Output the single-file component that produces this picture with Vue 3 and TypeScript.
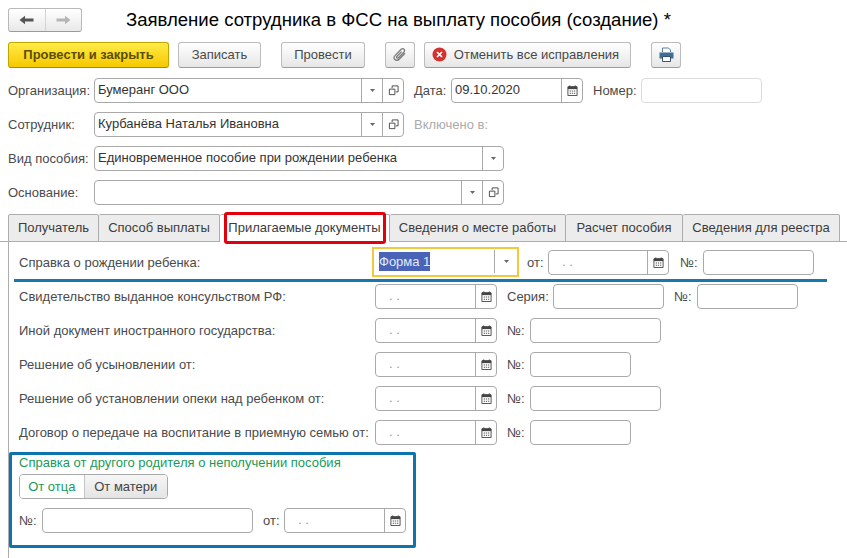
<script setup lang="ts">
interface Part { label: string; labelWidth: number; inputWidth: number }
interface DocRow { label: string; parts: Part[] }

const tabs: { name: string; width: number; active?: boolean }[] = [
  { name: 'Получатель', width: 91 },
  { name: 'Способ выплаты', width: 121 },
  { name: 'Прилагаемые документы', width: 170, active: true },
  { name: 'Сведения о месте работы', width: 176 },
  { name: 'Расчет пособия', width: 117 },
  { name: 'Сведения для реестра', width: 157 },
]

const no = (w: number): Part => ({ label: '№:', labelWidth: 23, inputWidth: w })

const docRows: DocRow[] = [
  { label: 'Свидетельство выданное консульством РФ:', parts: [{ label: 'Серия:', labelWidth: 46, inputWidth: 111 }, no(101)] },
  { label: 'Иной документ иностранного государства:', parts: [no(131)] },
  { label: 'Решение об усыновлении от:', parts: [no(101)] },
  { label: 'Решение об установлении опеки над ребенком от:', parts: [no(131)] },
  { label: 'Договор о передаче на воспитание в приемную семью от:', parts: [no(101)] },
]
</script>

<template>
  <div class="page">
    <svg class="defs" width="0" height="0" aria-hidden="true">
      <symbol id="i-cal" viewBox="0 0 12 12">
        <path d="M1 2h10v9.5H1z" fill="#fff" stroke="#444" stroke-width="1" />
        <path d="M1 1.5h10v3H1z" fill="#444" />
        <path d="M3 0.5v2M9 0.5v2" stroke="#444" stroke-width="1.2" />
        <path d="M3 6h1.4v1.2H3zM5.3 6h1.4v1.2H5.3zM7.6 6H9v1.2H7.6zM3 8.4h1.4v1.2H3zM5.3 8.4h1.4v1.2H5.3zM7.6 8.4H9v1.2H7.6z" fill="#555" />
      </symbol>
      <symbol id="i-open" viewBox="0 0 12 12">
        <path d="M4.5 3.5V1h6.5v6.5H8.5" fill="none" stroke="#444" stroke-width="1" />
        <path d="M1.5 4.5h6v6h-6z" fill="none" stroke="#444" stroke-width="1" />
      </symbol>
      <symbol id="i-down" viewBox="0 0 7 4">
        <path d="M0 0h7L3.5 4z" fill="#666" />
      </symbol>
    </svg>

    <section class="head">
      <div class="title-row">
        <div class="nav">
          <button class="nav-btn">
            <svg width="15" height="10" viewBox="0 0 15 10"><path d="M0.5 5L6 0.8V3.6H14.5V6.4H6V9.2z" fill="#555" /></svg>
          </button>
          <button class="nav-btn">
            <svg width="15" height="10" viewBox="0 0 15 10"><path d="M14.5 5L9 0.8V3.6H0.5V6.4H9V9.2z" fill="#b5b5b5" /></svg>
          </button>
        </div>
        <h1 class="title">Заявление сотрудника в ФСС на выплату пособия (создание) *</h1>
      </div>

      <div class="toolbar">
        <button class="btn primary">Провести и закрыть</button>
        <button class="btn b-save">Записать</button>
        <button class="btn b-post">Провести</button>
        <button class="btn b-clip" aria-label="Файлы">
          <svg width="16" height="16" viewBox="0 0 16 16">
            <path d="M13 6.2L7.2 12.2C5.9 13.5 4 13.6 2.9 12.5C1.8 11.4 2 9.6 3.2 8.4L9 2.5C9.9 1.6 11.2 1.5 12 2.3C12.8 3.1 12.7 4.3 11.8 5.2L6.4 10.7C5.9 11.2 5.2 11.3 4.8 10.9C4.4 10.5 4.5 9.8 5 9.3L9.6 4.6" fill="none" stroke="#7b7b7b" stroke-width="1.3" />
          </svg>
        </button>
        <button class="btn b-undo">
          <svg width="15" height="15" viewBox="0 0 15 15">
            <circle cx="7.5" cy="7.5" r="7" fill="#d4322e" />
            <path d="M5 5l5 5M10 5l-5 5" stroke="#fff" stroke-width="1.7" />
          </svg>
          Отменить все исправления
        </button>
        <button class="btn b-print" aria-label="Печать">
          <svg width="15" height="15" viewBox="0 0 15 15">
            <path d="M3.5 5V1h6l2 2v2" fill="#fff" stroke="#5d7f9c" />
            <path d="M0.5 5.5h14v6h-14z" fill="#3f6f96" />
            <path d="M3.5 9.5h8v5h-8z" fill="#fff" stroke="#35536e" />
          </svg>
        </button>
      </div>

      <div class="row">
        <label class="lab w-main">Организация:</label>
        <div class="field w-310">
          <span class="val">Бумеранг ООО</span>
          <span class="cell"><svg class="tri"><use href="#i-down" /></svg></span>
          <span class="cell"><svg class="ico"><use href="#i-open" /></svg></span>
        </div>
        <label class="lab w-date">Дата:</label>
        <div class="field w-132">
          <span class="val">09.10.2020</span>
          <span class="cell"><svg class="ico"><use href="#i-cal" /></svg></span>
        </div>
        <label class="lab w-num">Номер:</label>
        <div class="field w-121 off"></div>
      </div>

      <div class="row">
        <label class="lab w-main">Сотрудник:</label>
        <div class="field w-310">
          <span class="val">Курбанёва Наталья Ивановна</span>
          <span class="cell"><svg class="tri"><use href="#i-down" /></svg></span>
          <span class="cell"><svg class="ico"><use href="#i-open" /></svg></span>
        </div>
        <label class="lab muted">Включено в:</label>
      </div>

      <div class="row">
        <label class="lab w-main">Вид пособия:</label>
        <div class="field w-410">
          <span class="val">Единовременное пособие при рождении ребенка</span>
          <span class="cell"><svg class="tri"><use href="#i-down" /></svg></span>
        </div>
      </div>

      <div class="row">
        <label class="lab w-main">Основание:</label>
        <div class="field w-410">
          <span class="val"></span>
          <span class="cell"><svg class="tri"><use href="#i-down" /></svg></span>
          <span class="cell"><svg class="ico"><use href="#i-open" /></svg></span>
        </div>
      </div>
    </section>

    <nav class="tabs">
      <div
        v-for="t in tabs"
        :key="t.name"
        class="tab"
        :class="{ active: t.active }"
        :style="{ width: t.width + 'px' }"
      >{{ t.name }}</div>
      <div class="mark-red"></div>
    </nav>

    <main class="panel">
      <div class="mark-line"></div>

      <div class="row first">
        <label class="lab w-doc-focus">Справка о рождении ребенка:</label>
        <div class="focus">
          <span class="val"><span class="sel">Форма 1</span></span>
          <span class="cell"><svg class="tri"><use href="#i-down" /></svg></span>
        </div>
        <label class="lab w-ot">от:</label>
        <div class="field w-121">
          <span class="val empty">.  .</span>
          <span class="cell"><svg class="ico"><use href="#i-cal" /></svg></span>
        </div>
        <label class="lab w-no">№:</label>
        <div class="field w-111"></div>
      </div>

      <div v-for="r in docRows" :key="r.label" class="row">
        <label class="lab w-doc">{{ r.label }}</label>
        <div class="field w-122">
          <span class="val empty">.  .</span>
          <span class="cell"><svg class="ico"><use href="#i-cal" /></svg></span>
        </div>
        <template v-for="p in r.parts" :key="p.label">
          <label class="lab part" :style="{ width: p.labelWidth + 'px' }">{{ p.label }}</label>
          <div class="field" :style="{ width: p.inputWidth + 'px' }"></div>
        </template>
      </div>

      <section class="group">
        <div class="group-title">Справка от другого родителя о неполучении пособия</div>
        <div class="switch">
          <div class="sw on">От отца</div>
          <div class="sw">От матери</div>
        </div>
        <div class="row">
          <label class="lab w-no-g">№:</label>
          <div class="field w-211"></div>
          <label class="lab part w-ot">от:</label>
          <div class="field w-122">
            <span class="val empty">.  .</span>
            <span class="cell"><svg class="ico"><use href="#i-cal" /></svg></span>
          </div>
        </div>
      </section>
    </main>
  </div>
</template>

<style>
html, body { margin: 0; background: #fff; overflow: hidden; }
</style>

<style scoped>
.page {
  display: flex;
  flex-direction: column;
  height: 558px;
  font-family: "Liberation Sans", Arial, sans-serif;
  font-size: 13px;
  color: #444;
  overflow: hidden;
  box-sizing: border-box;
}
.page * { box-sizing: border-box; }
.defs { position: absolute; }

.head { padding: 8px 0 9px 8px; display: flex; flex-direction: column; gap: 9px; }
.title-row { display: flex; align-items: center; height: 24px; margin-bottom: 1px; }
.nav {
  display: flex;
  width: 74px;
  height: 24px;
  border: 1px solid #b8b8b8;
  border-bottom-color: #9a9a9a;
  border-radius: 3px;
  background: linear-gradient(#fff, #e9e9e9);
}
.nav-btn {
  flex: 1;
  border: 0;
  padding: 0;
  background: none;
  display: flex;
  align-items: center;
  justify-content: center;
}
.nav-btn + .nav-btn { border-left: 1px solid #d4d4d4; }
.title {
  margin: 0 0 0 44px;
  font-size: 18.56px;
  font-weight: 400;
  color: #000;
  white-space: nowrap;
  line-height: 24px;
}

.toolbar { display: flex; align-items: flex-start; height: 27px; }
.btn {
  height: 26px;
  font: inherit;
  color: #4a4a4a;
  padding: 0 0 1px;
  border: 1px solid #bcbcbc;
  border-bottom-color: #9c9c9c;
  border-radius: 3px;
  background: linear-gradient(#fff, #e6e6e6);
  display: flex;
  align-items: center;
  justify-content: center;
  white-space: nowrap;
}
.primary {
  width: 161px;
  font-weight: 700;
  color: #5c4d00;
  border-color: #c4a400;
  border-bottom-color: #a88c00;
  background: linear-gradient(#ffec45, #f6c800);
}
.b-save { width: 83px; margin-left: 9px; }
.b-post { width: 84px; margin-left: 20px; }
.b-clip { width: 30px; margin-left: 20px; }
.b-undo { width: 207px; margin-left: 9px; gap: 7px; padding-right: 4px; }
.b-print { width: 30px; margin-left: 20px; }

.row { display: flex; align-items: center; height: 25px; }
.lab { white-space: nowrap; flex: none; color: #4a4a4a; }
.head .lab { padding-bottom: 1px; }
.muted { color: #ababab; margin-left: 10px; }
.w-main { width: 86px; }
.w-date { width: 37px; margin-left: 10px; }
.w-num { width: 48px; margin-left: 10px; }
.w-doc { width: 356px; }
.w-doc-focus { width: 353px; }
.w-ot { width: 21px; margin-left: 8px; }
.w-no { width: 23px; margin-left: 11px; }
.w-no-g { width: 23px; }
.part { margin-left: 10px; }
.part.w-ot { margin-left: 10px; }

.field {
  flex: none;
  display: flex;
  height: 25px;
  border: 1px solid #a9a9a9;
  border-radius: 4px;
  background: #fff;
}
.off { border-color: #dcdcdc; }
.w-310 { width: 310px; }
.w-410 { width: 410px; }
.w-132 { width: 132px; }
.w-122 { width: 122px; }
.w-121 { width: 121px; }
.w-111 { width: 111px; }
.w-211 { width: 211px; }

.val {
  flex: 1;
  min-width: 0;
  padding-left: 3px;
  line-height: 22px;
  color: #333;
  white-space: pre;
  overflow: hidden;
}
.val.empty { padding-left: 13px; color: #9a9a9a; }
.cell {
  flex: none;
  width: 21px;
  border-left: 1px solid #a9a9a9;
  display: flex;
  align-items: center;
  justify-content: center;
}
.ico { width: 11px; height: 11px; }
.tri { width: 5px; height: 3px; }

.tabs {
  position: relative;
  display: flex;
  height: 28px;
  padding-left: 8px;
  border-bottom: 1px solid #adadad;
  flex: none;
}
.tab {
  height: 28px;
  flex: none;
  margin-right: 0;
  text-align: center;
  line-height: 26px;
  color: #3c3c3c;
  background: #ececec;
  border: 1px solid #adadad;
  border-left-width: 0;
  border-radius: 2px 2px 0 0;
  white-space: nowrap;
}
.tab:first-of-type { border-left-width: 1px; }
.tab.active { background: #fff; border-bottom-color: #fff; }
.mark-red {
  position: absolute;
  left: 224px;
  top: -2px;
  width: 162px;
  height: 32px;
  border: 3px solid #e2000f;
  border-radius: 3px;
  pointer-events: none;
}

.panel {
  position: relative;
  flex: 1;
  margin-left: 8px;
  border-left: 1px solid #adadad;
  padding-top: 8px;
  display: flex;
  flex-direction: column;
  gap: 9px;
}
.panel > .row { padding-left: 10px; }
.mark-line {
  position: absolute;
  left: 5px;
  top: 37px;
  width: 813px;
  height: 3px;
  background: #1878ad;
}

.focus {
  flex: none;
  display: flex;
  width: 147px;
  height: 30px;
  margin: -3px 0 -2px;
  padding: 1px 0;
  border: 2px solid #f0c93f;
}
.focus .val { padding-left: 5px; line-height: 24px; }
.focus .cell { width: 23px; margin-bottom: 1px; border-left-color: #a9a9a9; }
.sel { background: #4a63b6; color: #e4eafb; padding: 2px 0; }

.group {
  width: 407px;
  height: 96px;
  margin-top: -2px;
  border: 3px solid #0e74ad;
  border-radius: 2px;
  padding: 0 0 0 7px;
}
.group-title { height: 16px; line-height: 16px; color: #1a9a58; white-space: nowrap; }
.switch {
  display: flex;
  width: 149px;
  height: 25px;
  margin: 3px 0 9px;
  border: 1px solid #a9a9a9;
  border-radius: 4px;
  overflow: hidden;
}
.sw {
  width: 84px;
  line-height: 23px;
  text-align: center;
  color: #444;
  background: linear-gradient(#f6f6f6, #e4e4e4);
  border-left: 1px solid #c4c4c4;
}
.sw.on { width: 64px; color: #1a9a58; background: #fff; border-left: 0; }
</style>
